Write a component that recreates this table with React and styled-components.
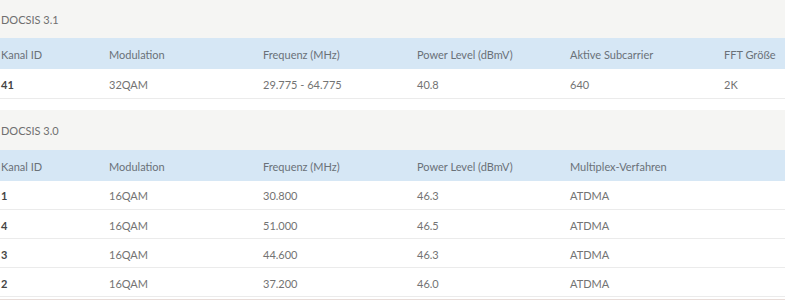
import React from "react";
import styled, { createGlobalStyle } from "styled-components";

const Global = createGlobalStyle`
  html, body { margin: 0; padding: 0; background: #ffffff; overflow: hidden; }
  body { font-family: "Source Sans Pro", Lato, "Open Sans", sans-serif; }
`;

const Page = styled.div`
  width: 940px;
  margin-top: -2px;
`;

const Section = styled.section`
  margin-bottom: ${(p) => p.$gap}px;
`;

const Caption = styled.div`
  height: 40px;
  background: #f5f5f3;
  display: flex;
  align-items: center;
  padding: 2px 0 0 1px;
  box-sizing: border-box;
  font-size: 11px;
  color: #6f6f6f;
`;

const Table = styled.table`
  border-collapse: collapse;
  table-layout: fixed;
  width: 940px;
`;

const Col = styled.col`
  width: ${(p) => p.$w}px;
`;

const HeadRow = styled.tr`
  background: #d6e7f5;
  height: 31px;
`;

const Th = styled.th`
  text-align: left;
  font-weight: 400;
  font-size: 11px;
  color: #6a7178;
  padding: 2px 0 0 1px;
  white-space: nowrap;
`;

const Row = styled.tr`
  height: 29px;
  border-bottom: 1px solid #ebebeb;
`;

const Td = styled.td`
  font-size: 11px;
  padding: 2px 0 0 1px;
  color: ${(p) => (p.$strong ? "#444" : "#737373")};
  font-weight: ${(p) => (p.$strong ? 700 : 400)};
  white-space: nowrap;
`;

const Footer = styled.div`
  height: 10px;
  background: #e8dcd8;
`;

const widths = [108, 154, 154, 153, 154, 217];

const data31 = {
  title: "DOCSIS 3.1",
  head: ["Kanal ID", "Modulation", "Frequenz (MHz)", "Power Level (dBmV)", "Aktive Subcarrier", "FFT Größe"],
  rows: [["41", "32QAM", "29.775 - 64.775", "40.8", "640", "2K"]],
};

const data30 = {
  title: "DOCSIS 3.0",
  head: ["Kanal ID", "Modulation", "Frequenz (MHz)", "Power Level (dBmV)", "Multiplex-Verfahren", ""],
  rows: [
    ["1", "16QAM", "30.800", "46.3", "ATDMA", ""],
    ["4", "16QAM", "51.000", "46.5", "ATDMA", ""],
    ["3", "16QAM", "44.600", "46.3", "ATDMA", ""],
    ["2", "16QAM", "37.200", "46.0", "ATDMA", ""],
  ],
};

function ChannelTable({ data, gap }) {
  return (
    <Section $gap={gap}>
      <Caption>{data.title}</Caption>
      <Table>
        <colgroup>
          {widths.map((w, i) => (
            <Col key={i} $w={w} />
          ))}
        </colgroup>
        <thead>
          <HeadRow>
            {data.head.map((h, i) => (
              <Th key={i}>{h}</Th>
            ))}
          </HeadRow>
        </thead>
        <tbody>
          {data.rows.map((r, i) => (
            <Row key={i}>
              {r.map((c, j) => (
                <Td key={j} $strong={j === 0}>
                  {c}
                </Td>
              ))}
            </Row>
          ))}
        </tbody>
      </Table>
    </Section>
  );
}

export default function App() {
  return (
    <>
      <Global />
      <Page>
        <ChannelTable data={data31} gap={11} />
        <ChannelTable data={data30} gap={2} />
        <Footer />
      </Page>
    </>
  );
}
